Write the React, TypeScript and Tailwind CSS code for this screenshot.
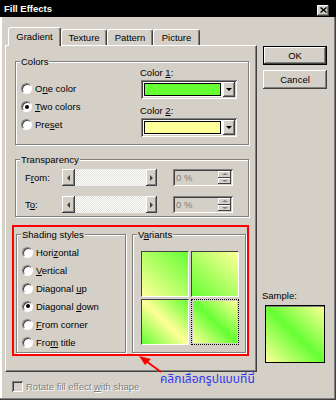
import type { ReactNode } from "react";

const GREEN = "#66ff33";
const YELLOW = "#ffff99";

function U({ children }: { children: ReactNode }) {
  return <span className="underline underline-offset-[1px]">{children}</span>;
}

function Radio({ checked }: { checked?: boolean }) {
  return (
    <span className="w-[11px] h-[11px] shrink-0 rounded-full bg-white border border-[#808080] border-r-white border-b-white shadow-[inset_1px_1px_0_#404040] flex items-center justify-center">
      {checked && <span className="w-[4px] h-[4px] rounded-full bg-black" />}
    </span>
  );
}

function Group({ label, className, children }: { label: ReactNode; className?: string; children?: ReactNode }) {
  return (
    <div className={`relative shrink-0 border border-[#808080] shadow-[inset_1px_1px_0_#fff,1px_1px_0_#fff] ${className ?? ""}`}>
      <span className="absolute -top-[6px] left-[4px] bg-[#d4d0c8] px-px leading-[11px]">{label}</span>
      {children}
    </div>
  );
}

function Combo({ color }: { color: string }) {
  return (
    <div className="ml-px w-[96px] h-[19px] bg-white p-[2px] flex shadow-[inset_1px_1px_0_#808080,inset_-1px_-1px_0_#fff,inset_2px_2px_0_#404040,inset_-2px_-2px_0_#d4d0c8]">
      <div className="flex-1 m-px mr-[2px] border border-black" style={{ background: color }} />
      <div className="w-[12px] h-full bg-[#d4d0c8] flex items-center justify-center shadow-[inset_-1px_-1px_0_#404040,inset_1px_1px_0_#fff,inset_-2px_-2px_0_#808080]">
        <span className="w-0 h-0 border-x-[3px] border-x-transparent border-t-[3px] border-t-black" />
      </div>
    </div>
  );
}

function Slider() {
  return (
    <div className="w-[95px] h-[17px] flex">
      <div className="w-[13px] h-full flex items-center justify-center shadow-[inset_-1px_-1px_0_#404040,inset_1px_1px_0_#fff,inset_-2px_-2px_0_#808080]">
        <span className="w-0 h-0 border-y-[3px] border-y-transparent border-r-[3px] border-r-[#404040]" />
      </div>
      <div className="flex-1 h-full bg-[image:repeating-conic-gradient(#ffffff_0_25%,#e2e0da_0_50%)] bg-[length:2px_2px]" />
      <div className="w-[11px] h-full flex items-center justify-center shadow-[inset_-1px_-1px_0_#404040,inset_1px_1px_0_#fff,inset_-2px_-2px_0_#808080]">
        <span className="w-0 h-0 border-y-[3px] border-y-transparent border-l-[3px] border-l-[#404040]" />
      </div>
    </div>
  );
}

function Spin() {
  return (
    <div className="ml-[16px] w-[60px] h-[17px] flex p-[2px] shadow-[inset_1px_1px_0_#808080,inset_-1px_-1px_0_#fff,inset_2px_2px_0_#404040,inset_-2px_-2px_0_#d4d0c8]">
      <span className="flex-1 pl-[1px] leading-[13px] text-[#808080]">0 %</span>
      <div className="w-[13px] flex flex-col">
        <div className="flex-1 flex items-center justify-center shadow-[inset_-1px_-1px_0_#404040,inset_1px_1px_0_#fff]">
          <span className="w-0 h-0 border-x-[3px] border-x-transparent border-b-[2px] border-b-[#808080]" />
        </div>
        <div className="flex-1 flex items-center justify-center shadow-[inset_-1px_-1px_0_#404040,inset_1px_1px_0_#fff]">
          <span className="w-0 h-0 border-x-[3px] border-x-transparent border-t-[2px] border-t-[#808080]" />
        </div>
      </div>
    </div>
  );
}

function Tab({ label, active, width }: { label: string; active?: boolean; width: string }) {
  return (
    <div
      className={`${width} ${active ? "h-[19px] self-start bg-[#d4d0c8] pb-[2px]" : "h-[16px]"} shrink-0 rounded-t-[3px] border-l border-t border-white border-r border-r-[#404040] shadow-[inset_-1px_0_0_#808080] flex items-center justify-center leading-[11px]`}
    >
      {label}
    </div>
  );
}

function Option({ checked, children }: { checked?: boolean; children: ReactNode }) {
  return (
    <label className="flex-1 flex items-center gap-[3px]">
      <Radio checked={checked} />
      <span>{children}</span>
    </label>
  );
}

const tiles = [
  `linear-gradient(to bottom left, ${GREEN}, ${YELLOW})`,
  `linear-gradient(to bottom left, ${YELLOW}, ${GREEN})`,
  `linear-gradient(to bottom left, ${GREEN}, ${YELLOW} 50%, ${GREEN})`,
  `linear-gradient(to bottom left, ${YELLOW}, ${GREEN} 50%, ${YELLOW})`,
];

export default function App() {
  return (
    <div className="relative w-[336px] h-[400px] overflow-hidden bg-[#d4d0c8] text-black text-[9.5px] leading-[11px] font-['Liberation_Sans',Arial,sans-serif] flex flex-col shadow-[inset_-1px_-1px_0_#404040,inset_-2px_-2px_0_#808080,inset_2px_0_0_#fff]">
      {/* title bar */}
      <div className="h-[17px] shrink-0 bg-black flex items-center justify-between pl-[4px] pr-[7px]">
        <span className="text-white font-bold">Fill Effects</span>
        <span className="mt-[3px] w-[12px] h-[11px] bg-[#d4d0c8] flex items-center justify-center shadow-[inset_-1px_-1px_0_#404040,inset_1px_1px_0_#fff,inset_-2px_-2px_0_#808080]">
          <svg width="7" height="6" viewBox="0 0 7 6">
            <path d="M0.5 0.5 L6.5 5.5 M6.5 0.5 L0.5 5.5" stroke="#000" strokeWidth="1.4" />
          </svg>
        </span>
      </div>

      <div className="flex pt-[10px]">
        {/* left column */}
        <div className="ml-[5px] w-[252px] flex flex-col">
          <div className="relative z-10 flex items-end h-[18px] pl-[3px]">
            <Tab label="Gradient" active width="w-[53px]" />
            <Tab label="Texture" width="w-[46px]" />
            <Tab label="Pattern" width="w-[46px]" />
            <Tab label="Picture" width="w-[47px]" />
          </div>

          <div className="h-[327px] flex flex-col pl-[9px] pt-[15px] border-l border-t border-white border-r border-b border-r-[#404040] border-b-[#404040] shadow-[inset_-1px_-1px_0_#808080]">
            <Group label="Colors" className="w-[234px] h-[84px] flex">
              <div className="w-[124px] pl-[5px] pt-[18px] pb-[11px] flex flex-col">
                <Option>O<U>n</U>e color</Option>
                <Option checked><U>T</U>wo colors</Option>
                <Option>Pre<U>s</U>et</Option>
              </div>
              <div className="pt-[5px] flex flex-col">
                <span>Color <U>1</U>:</span>
                <div className="mt-[2px]"><Combo color={GREEN} /></div>
                <span className="mt-[6px]">Color <U>2</U>:</span>
                <div className="mt-[2px]"><Combo color={YELLOW} /></div>
              </div>
            </Group>

            <Group label="Transparency" className="mt-[14px] w-[234px] h-[58px] pt-[9px] pl-[9px]">
              <div className="flex items-center h-[17px]">
                <span className="w-[37px]">F<U>r</U>om:</span>
                <Slider />
                <Spin />
              </div>
              <div className="flex items-center h-[17px] mt-[10px]">
                <span className="w-[37px]">T<U>o</U>:</span>
                <Slider />
                <Spin />
              </div>
            </Group>

            <div className="mt-[17px] ml-px flex gap-[6px]">
              <Group label="Shading styles" className="w-[110px] h-[119px] pl-[5px] pt-[9px] pb-px flex flex-col">
                <Option>Hori<U>z</U>ontal</Option>
                <Option><U>V</U>ertical</Option>
                <Option>Diagonal <U>u</U>p</Option>
                <Option checked>Diagonal <U>d</U>own</Option>
                <Option><U>F</U>rom corner</Option>
                <Option>Fro<U>m</U> title</Option>
              </Group>
              <Group label={<>V<U>a</U>riants</>} className="w-[114px] h-[119px] pl-[8px] pt-[16px]">
                <div className="grid grid-cols-[48px_48px] gap-[2px]">
                  {tiles.slice(0, 3).map((bg, i) => (
                    <div key={i} className="h-[46px] border border-[#404040] border-r-white border-b-white" style={{ background: bg }} />
                  ))}
                  <div className="h-[46px] border border-dotted border-black p-px">
                    <div className="w-full h-full" style={{ background: tiles[3] }} />
                  </div>
                </div>
              </Group>
            </div>
          </div>

          <div className="mt-[9px] pl-[7px] flex items-center gap-[3px]">
            <span className="w-[11px] h-[11px] shadow-[inset_1px_1px_0_#808080,inset_-1px_-1px_0_#fff,inset_2px_2px_0_#404040,inset_-2px_-2px_0_#d4d0c8]" />
            <span className="text-[#808080] [text-shadow:1px_1px_0_#fff]">Rotate fill effect <U>w</U>ith shape</span>
          </div>
        </div>

        {/* right column */}
        <div className="ml-[6px] pt-[19px] flex flex-col">
          <button className="w-[64px] h-[19px] border border-black flex items-center justify-center shadow-[inset_-1px_-1px_0_#404040,inset_1px_1px_0_#fff,inset_-2px_-2px_0_#808080]">
            OK
          </button>
          <button className="mt-[5px] w-[64px] h-[19px] flex items-center justify-center shadow-[inset_-1px_-1px_0_#404040,inset_1px_1px_0_#fff,inset_-2px_-2px_0_#808080]">
            Cancel
          </button>
          <span className="mt-[201px] -ml-px">Sample:</span>
          <div
            className="mt-[4px] ml-[2px] w-[60px] h-[58px] border border-black shadow-[inset_0_1px_0_#808080]"
            style={{ background: tiles[3] }}
          />
        </div>
      </div>

      {/* annotation overlay */}
      <div className="absolute left-[12px] top-[225px] w-[237px] h-[131px] border-2 border-[#ff0000]" />
      <svg className="absolute left-0 top-0" width="336" height="400" viewBox="0 0 336 400">
        <line x1="161" y1="372" x2="146" y2="361" stroke="#ff0000" strokeWidth="2" />
        <polygon points="139,356 151,359 145,365" fill="#ff0000" />
      </svg>
      <span className="absolute left-[160px] top-[372px] text-[12px] leading-[15px] text-[#3333ee] font-['Noto_Sans_Thai','Noto_Sans',sans-serif]">
        คลิกเลือกรูปแบบที่นี่
      </span>
    </div>
  );
}
